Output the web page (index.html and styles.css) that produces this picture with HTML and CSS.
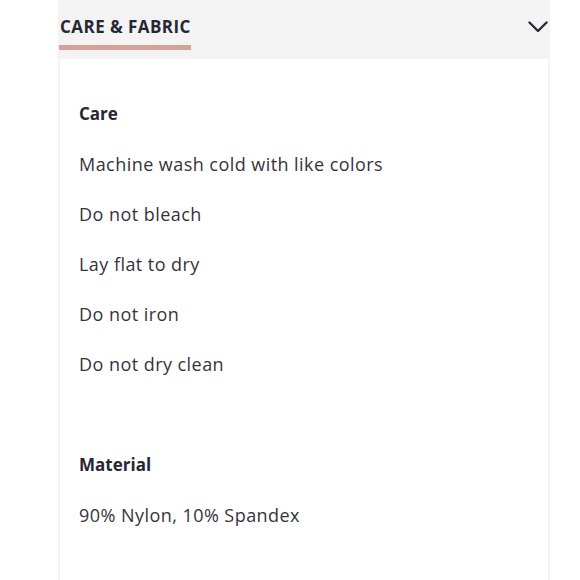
FILE: index.html
```html
<!DOCTYPE html>
<html>
<head>
<meta charset="utf-8">
<link rel="stylesheet" href="styles.css">
</head>
<body>
<div class="accordion">
  <div class="acc-header">
    <div class="tab">
      <span class="tab-label">CARE &amp; FABRIC</span>
      <span class="tab-bar"></span>
    </div>
    <svg class="chevron" width="20" height="12" viewBox="0 0 20 12"><path d="M1.5 1.5 L10 10 L18.5 1.5" fill="none" stroke="#2a2a35" stroke-width="2.4" stroke-linecap="round" stroke-linejoin="round"/></svg>
  </div>
  <div class="acc-panel">
    <div class="group">
      <div class="heading">Care</div>
      <div class="item">Machine wash cold with like colors</div>
      <div class="item">Do not bleach</div>
      <div class="item">Lay flat to dry</div>
      <div class="item">Do not iron</div>
      <div class="item">Do not dry clean</div>
    </div>
    <div class="group">
      <div class="heading">Material</div>
      <div class="item">90% Nylon, 10% Spandex</div>
    </div>
  </div>
</div>
</body>
</html>
```
FILE: styles.css
```css
html, body {
  margin: 0;
  padding: 0;
  background: #ffffff;
}
body {
  font-family: "Open Sans", "Liberation Sans", sans-serif;
  color: #2f2f38;
}
.accordion {
  margin-left: 58px;
  width: 492px;
}
.acc-header {
  height: 59px;
  background: #f3f3f3;
  display: flex;
  justify-content: space-between;
  align-items: flex-start;
}
.tab {
  display: flex;
  flex-direction: column;
  padding-top: 16px;
  margin-left: 1px;
}
.tab-label {
  font-size: 17px;
  font-weight: 700;
  line-height: 22px;
  color: #272733;
  padding-left: 1px;
  letter-spacing: 0.45px;
}
.tab-bar {
  display: block;
  height: 5px;
  margin-top: 7px;
  background: #d2a398;
}
.chevron {
  margin-top: 21px;
  margin-right: 2px;
}
.acc-panel {
  border-left: 2px solid #f3f3f3;
  border-right: 2px solid #f3f3f3;
  padding: 30px 0 40px 19px;
}
.group + .group {
  margin-top: 51px;
}
.heading {
  font-size: 17px;
  font-weight: 700;
  line-height: 50px;
  color: #272733;
}
.item {
  font-size: 18px;
  line-height: 50px;
  letter-spacing: 0.45px;
  color: #34343c;
}
```
